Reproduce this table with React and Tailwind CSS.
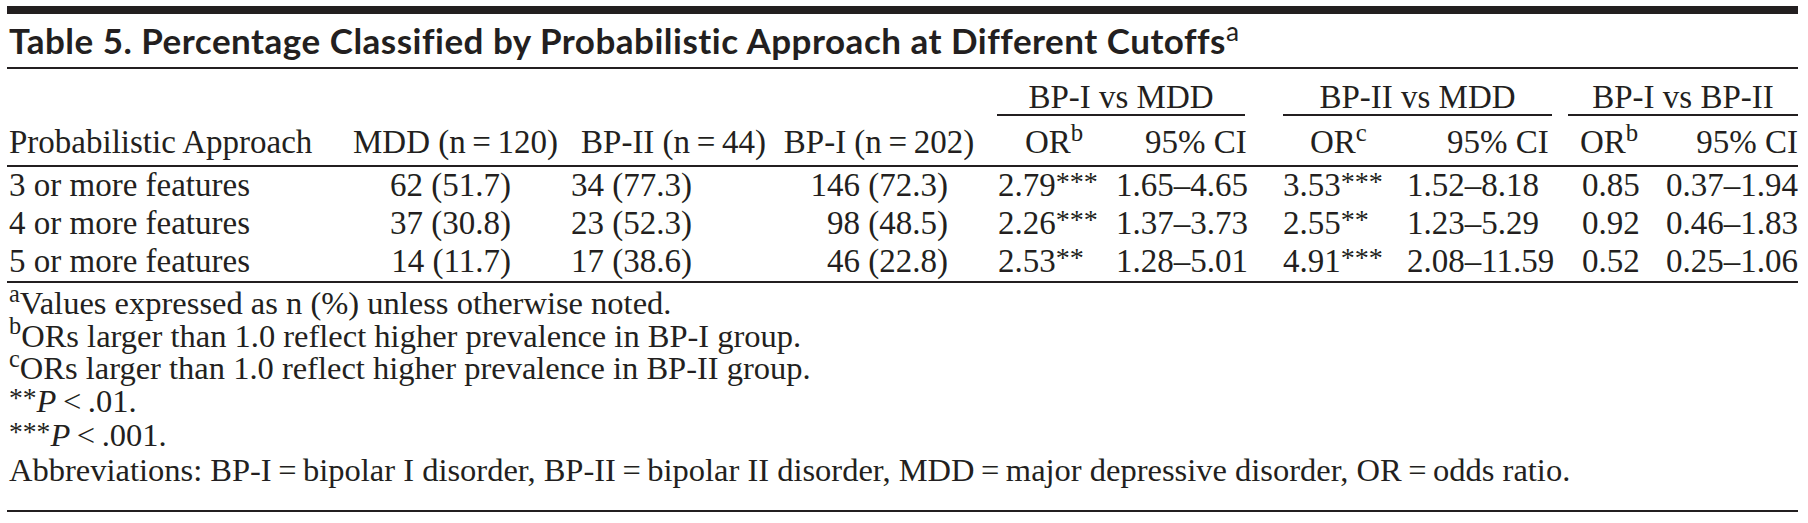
import React from "react";

const rows = [
  {
    label: "3 or more features",
    mdd: "62 (51.7)",
    bp2: "34 (77.3)",
    bp1: "146 (72.3)",
    or1: "2.79",
    s1: "***",
    ci1: "1.65–4.65",
    or2: "3.53",
    s2: "***",
    ci2: "1.52–8.18",
    or3: "0.85",
    ci3: "0.37–1.94",
  },
  {
    label: "4 or more features",
    mdd: "37 (30.8)",
    bp2: "23 (52.3)",
    bp1: "98 (48.5)",
    or1: "2.26",
    s1: "***",
    ci1: "1.37–3.73",
    or2: "2.55",
    s2: "**",
    ci2: "1.23–5.29",
    or3: "0.92",
    ci3: "0.46–1.83",
  },
  {
    label: "5 or more features",
    mdd: "14 (11.7)",
    bp2: "17 (38.6)",
    bp1: "46 (22.8)",
    or1: "2.53",
    s1: "**",
    ci1: "1.28–5.01",
    or2: "4.91",
    s2: "***",
    ci2: "2.08–11.59",
    or3: "0.52",
    ci3: "0.25–1.06",
  },
];

const Stars = ({ children }) => (
  <span className="relative -top-[0.18em] text-[0.85em]">{children}</span>
);

const Group = ({ label, className }) => (
  <div className={`col-span-2 pt-[11px] pb-[4px] ${className}`}>
    <div className="leading-[34px] text-center">{label}</div>
    <div className="h-[2px] bg-[#231f20]" />
  </div>
);

const App = () => {
  return (
    <div className="w-[1808px] h-[523px] overflow-hidden bg-white text-[#231f20]">
      <div className="ml-[7px] w-[1791px] pt-[6px]">
        <div className="h-[8px] bg-[#231f20]" />

        <div className="h-[53px] flex items-center pl-[2px] font-['Lato',sans-serif] font-bold text-[35px] tracking-[0.5px]">
          <span>
            Table 5. Percentage Classified by Probabilistic Approach at Different Cutoffs
            <sup className="font-normal tracking-normal">a</sup>
          </span>
        </div>
        <div className="h-[2px] bg-[#231f20]" />

        <div className="grid grid-cols-[333px_231px_205px_206px_126px_160px_132px_166px_79px_153px] font-['Liberation_Serif','Times_New_Roman',serif] text-[33px] whitespace-nowrap">
          {/* group headings */}
          <div className="col-span-4" />
          <Group label="BP-I vs MDD" className="ml-[15px] mr-[23px]" />
          <Group label="BP-II vs MDD" className="ml-[15px] mr-[14px]" />
          <Group label="BP-I vs BP-II" className="ml-[2px]" />

          {/* column headings */}
          <div className="pt-[3px] pb-[4px] leading-[38px] pl-[2px]">
            Probabilistic Approach
          </div>
          <div className="pt-[3px] pb-[4px] leading-[38px] text-center">
            MDD (n{"\u2009"}={"\u2009"}120)
          </div>
          <div className="pt-[3px] pb-[4px] leading-[38px] text-center">
            BP-II (n{"\u2009"}={"\u2009"}44)
          </div>
          <div className="pt-[3px] pb-[4px] leading-[38px] text-center">
            BP-I (n{"\u2009"}={"\u2009"}202)
          </div>
          <div className="pt-[3px] pb-[4px] leading-[38px] pl-[43px]">
            OR<sup>b</sup>
          </div>
          <div className="pt-[3px] pb-[4px] leading-[38px] pl-[37px]">95% CI</div>
          <div className="pt-[3px] pb-[4px] leading-[38px] pl-[42px]">
            OR<sup>c</sup>
          </div>
          <div className="pt-[3px] pb-[4px] leading-[38px] pl-[47px]">95% CI</div>
          <div className="pt-[3px] pb-[4px] leading-[38px] pl-[14px]">
            OR<sup>b</sup>
          </div>
          <div className="pt-[3px] pb-[4px] leading-[38px] text-right">95% CI</div>

          <div className="col-span-10 h-[2px] bg-[#231f20]" />

          {rows.map((r) => (
            <React.Fragment key={r.label}>
              <div className="leading-[37px] pl-[2px]">{r.label}</div>
              <div className="leading-[37px] text-right pr-[60px]">{r.mdd}</div>
              <div className="leading-[37px] text-right pr-[84px]">{r.bp2}</div>
              <div className="leading-[37px] text-right pr-[34px]">{r.bp1}</div>
              <div className="leading-[37px] pl-[16px]">
                {r.or1}
                <Stars>{r.s1}</Stars>
              </div>
              <div className="leading-[37px] pl-[8px]">{r.ci1}</div>
              <div className="leading-[37px] pl-[15px]">
                {r.or2}
                <Stars>{r.s2}</Stars>
              </div>
              <div className="leading-[37px] pl-[7px]">{r.ci2}</div>
              <div className="leading-[37px] pl-[16px]">{r.or3}</div>
              <div className="leading-[37px] text-right">{r.ci3}</div>
            </React.Fragment>
          ))}

          <div className="col-span-10 h-[2px] bg-[#231f20]" />
        </div>

        <div className="pt-[4px] pb-[24px] pl-[2px] font-['Liberation_Serif','Times_New_Roman',serif] text-[32.5px] leading-[32.5px] whitespace-nowrap">
          <div>
            <sup>a</sup>Values expressed as n (%) unless otherwise noted.
          </div>
          <div>
            <sup>b</sup>ORs larger than 1.0 reflect higher prevalence in BP-I group.
          </div>
          <div>
            <sup>c</sup>ORs larger than 1.0 reflect higher prevalence in BP-II group.
          </div>
          <div>
            <Stars>**</Stars>
            <i>P</i>
            {"\u2009"}&lt;{"\u2009"}.01.
          </div>
          <div>
            <Stars>***</Stars>
            <i>P</i>
            {"\u2009"}&lt;{"\u2009"}.001.
          </div>
          <div>
            Abbreviations: BP-I{"\u2009"}={"\u2009"}bipolar I disorder, BP-II{"\u2009"}={"\u2009"}bipolar II disorder,
            MDD{"\u2009"}={"\u2009"}major depressive disorder, OR{"\u2009"}={"\u2009"}odds ratio.
          </div>
        </div>
        <div className="h-[2px] bg-[#231f20]" />
      </div>
    </div>
  );
};

export default App;
